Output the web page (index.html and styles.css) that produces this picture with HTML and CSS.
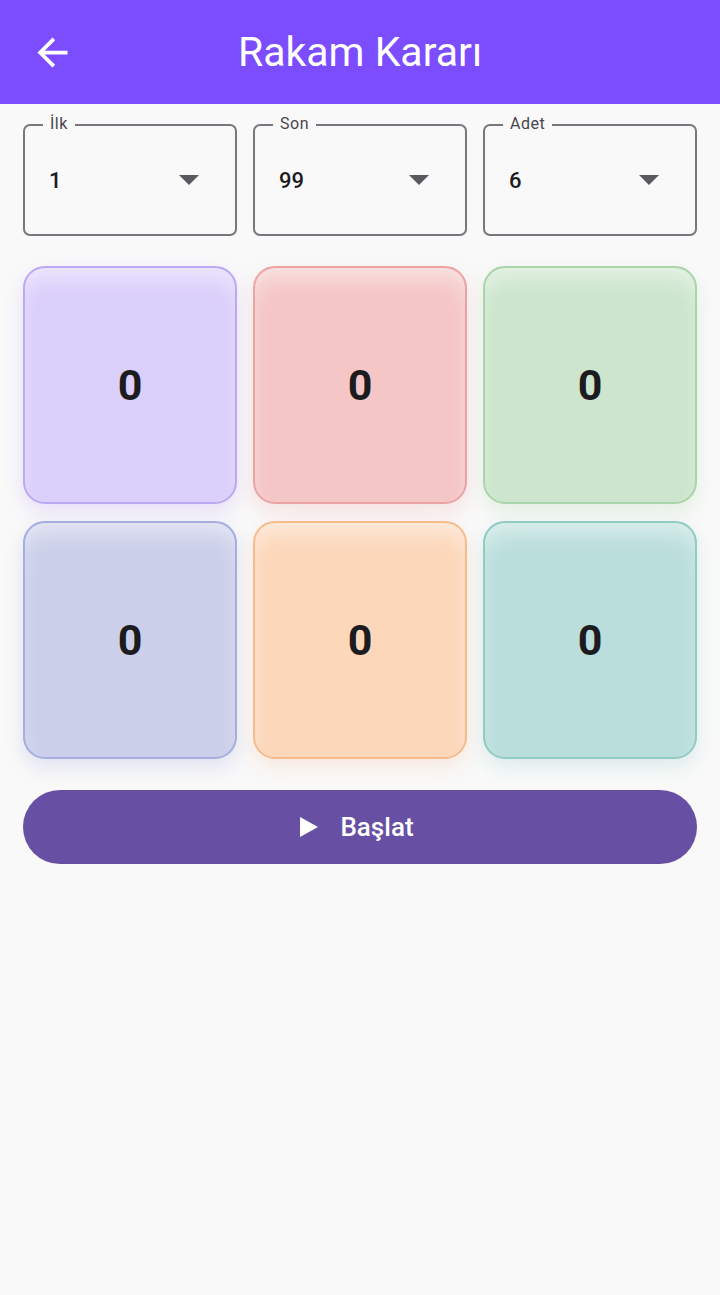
FILE: index.html
```html
<!DOCTYPE html>
<html lang="tr">
<head>
<meta charset="utf-8">
<link rel="stylesheet" href="styles.css">
</head>
<body>
<header class="appbar">
  <svg class="back" viewBox="0 0 24 24" width="45" height="45"><path d="M20 11H7.83l5.59-5.59L12 4l-8 8 8 8 1.41-1.41L7.83 13H20v-2z" fill="#fff"/></svg>
  <h1 class="title">Rakam Kararı</h1>
</header>
<main class="content">
  <div class="fields">
    <div class="field"><span class="label">İlk</span><span class="value">1</span><span class="arrow"></span></div>
    <div class="field"><span class="label">Son</span><span class="value">99</span><span class="arrow"></span></div>
    <div class="field"><span class="label">Adet</span><span class="value">6</span><span class="arrow"></span></div>
  </div>
  <div class="cards">
    <div class="card c1">0</div>
    <div class="card c2">0</div>
    <div class="card c3">0</div>
    <div class="card c4">0</div>
    <div class="card c5">0</div>
    <div class="card c6">0</div>
  </div>
  <button class="start"><svg viewBox="0 0 18 20" width="18" height="20"><path d="M0 0L18 10L0 20Z" fill="#fff"/></svg><span>Başlat</span></button>
</main>
</body>
</html>
```
FILE: styles.css
```css
html, body { margin: 0; padding: 0; }
body {
  background: #f9f9f9;
  font-family: Roboto, "Noto Sans", sans-serif;
  width: 720px;
  height: 1295px;
  overflow: hidden;
}
.appbar {
  height: 104px;
  background: #7c4dff;
  display: flex;
  align-items: center;
  justify-content: center;
  position: relative;
}
.back { position: absolute; left: 30px; top: 30px; }
.title {
  margin: 0;
  color: #fff;
  font-weight: 400;
  font-size: 41px;
  letter-spacing: 0;
}
.content { padding: 20px 23px 0; }
.fields {
  display: grid;
  grid-template-columns: repeat(3, 1fr);
  gap: 16px;
}
.field {
  height: 112px;
  box-sizing: border-box;
  border: 2px solid #79767d;
  border-radius: 7px;
  display: flex;
  align-items: center;
  padding: 0 36px 0 24px;
  position: relative;
}
.label {
  position: absolute;
  top: -12px;
  left: 18px;
  padding: 0 7px;
  background: #f9f9f9;
  font-size: 16px;
  line-height: 20px;
  color: #49454f;
  letter-spacing: 0.5px;
}
.value {
  flex: 1;
  font-size: 22px;
  font-weight: 500;
  color: #1c1b1f;
}
.arrow {
  width: 0; height: 0;
  border-left: 10px solid transparent;
  border-right: 10px solid transparent;
  border-top: 10px solid #5a5a5e;
}
.cards {
  margin-top: 30px;
  display: grid;
  grid-template-columns: repeat(3, 1fr);
  column-gap: 16px;
  row-gap: 17px;
}
.card {
  height: 238px;
  box-sizing: border-box;
  border-radius: 22px;
  border: 2px solid;
  display: flex;
  align-items: center;
  justify-content: center;
  font-size: 43px;
  font-weight: 700;
  color: #1c1b1f;
}
.c1 { background: #dbcffb; border-color: #bba9f5; box-shadow: inset 0 16px 22px -6px rgba(255,255,255,0.5), 0 8px 20px rgba(150,110,250,0.18); }
.c2 { background: #f5c6c6; border-color: #eba3a3; box-shadow: inset 0 16px 22px -6px rgba(255,255,255,0.5), 0 8px 20px rgba(240,120,120,0.18); }
.c3 { background: #cce5cc; border-color: #aad4aa; box-shadow: inset 0 16px 22px -6px rgba(255,255,255,0.5), 0 8px 20px rgba(120,200,120,0.18); }
.c4 { background: #cbcfe9; border-color: #a6aee0; box-shadow: inset 0 16px 22px -6px rgba(255,255,255,0.5), 0 8px 20px rgba(110,120,210,0.18); }
.c5 { background: #fcd7ba; border-color: #f7bb8c; box-shadow: inset 0 16px 22px -6px rgba(255,255,255,0.5), 0 8px 20px rgba(250,160,100,0.18); }
.c6 { background: #badedc; border-color: #90cbc4; box-shadow: inset 0 16px 22px -6px rgba(255,255,255,0.5), 0 8px 20px rgba(90,180,170,0.18); }
.start {
  margin-top: 31px;
  width: 100%;
  height: 74px;
  border: none;
  border-radius: 37px;
  background: #6750a4;
  color: #fff;
  font-family: Roboto, "Noto Sans", sans-serif;
  font-size: 26px;
  font-weight: 500;
  display: flex;
  align-items: center;
  justify-content: center;
  gap: 22px;
  padding: 0 6px 0 0;
}
```
